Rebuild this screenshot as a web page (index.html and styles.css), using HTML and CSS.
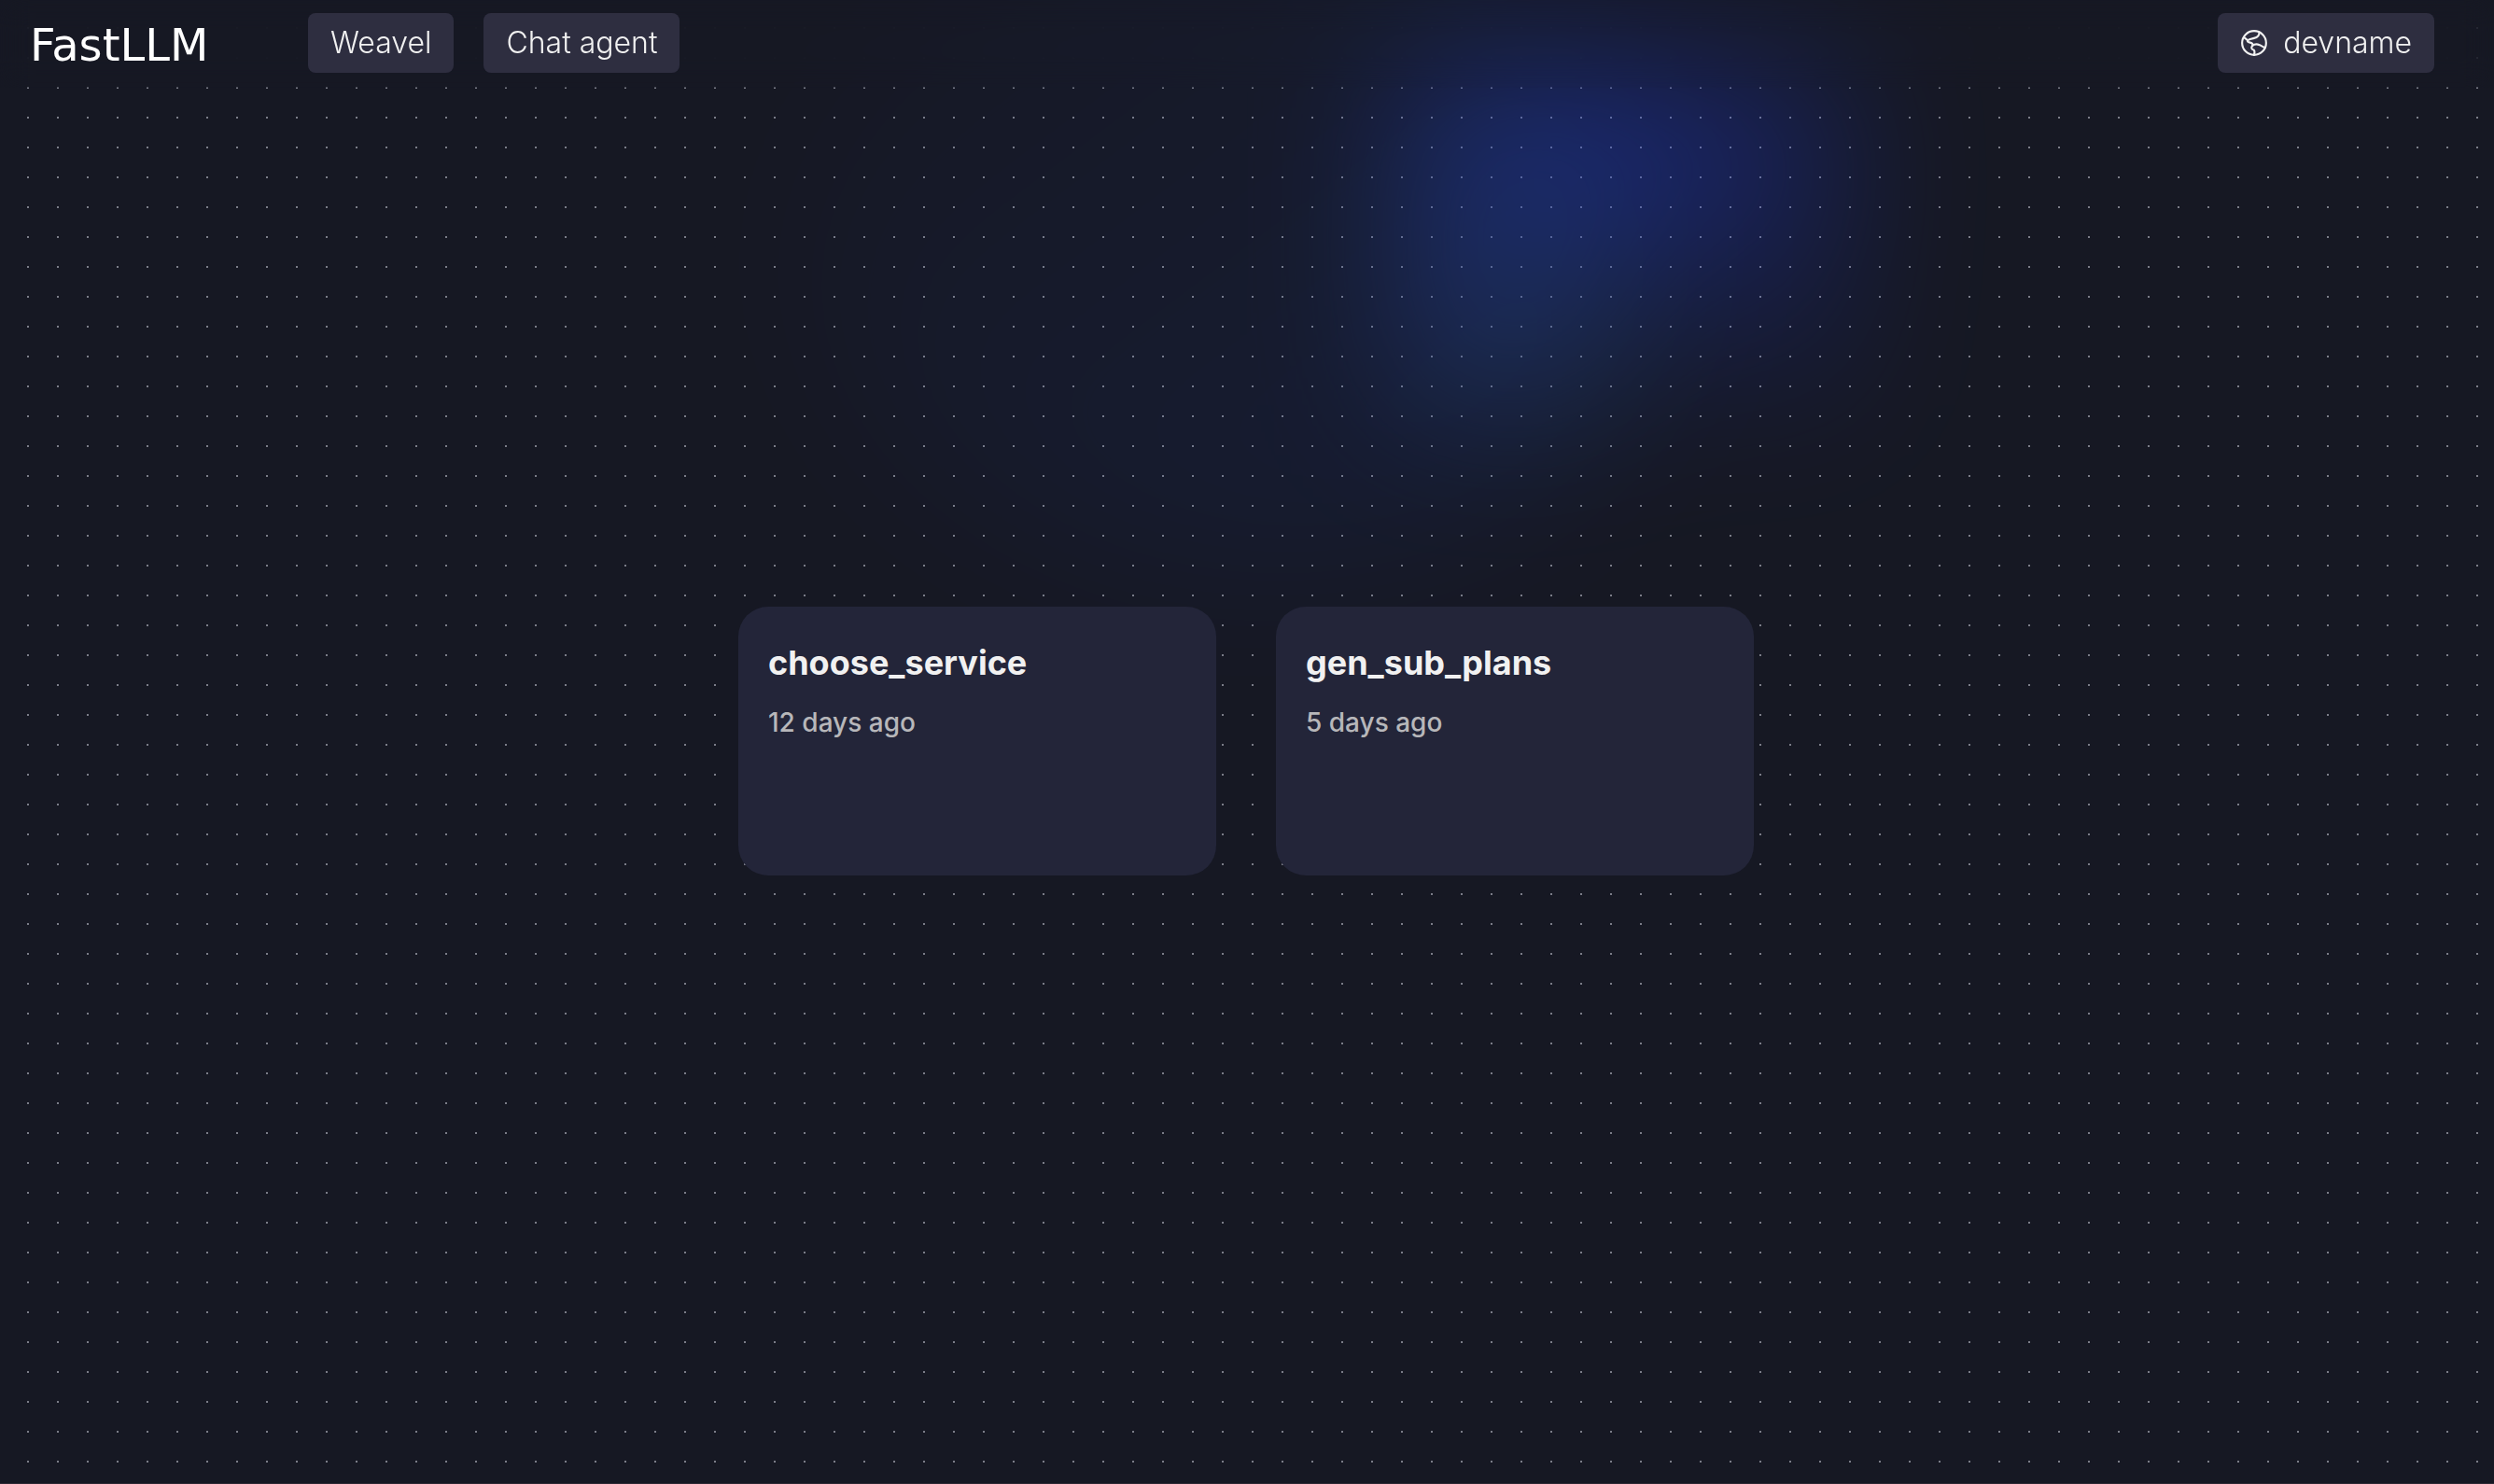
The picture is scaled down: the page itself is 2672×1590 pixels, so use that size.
FILE: index.html
```html
<!DOCTYPE html>
<html lang="en">
<head>
  <meta charset="utf-8">
  <meta name="viewport" content="width=device-width, initial-scale=1">
  <title>FastLLM</title>
  <link rel="stylesheet" href="styles.css">
</head>
<body>
  <div class="page">
    <div class="glow" aria-hidden="true"></div>
    <div class="dots" aria-hidden="true"></div>
    <main class="main">
      <a class="card" href="#choose_service">
        <h2 class="card-title">choose_service</h2>
        <p class="card-date">12 days ago</p>
      </a>
      <a class="card" href="#gen_sub_plans">
        <h2 class="card-title">gen_sub_plans</h2>
        <p class="card-date">5 days ago</p>
      </a>
    </main>
    <header class="header">
      <a class="logo" href="#home">FastLLM</a>
      <nav class="nav">
        <button class="button" type="button">Weavel</button>
        <button class="button" type="button">Chat agent</button>
      </nav>
      <button class="button button-user" type="button">
        <svg class="icon" viewBox="0 0 28 28" fill="none" stroke="currentColor" stroke-width="2" stroke-linecap="round" stroke-linejoin="round" aria-hidden="true">
          <circle cx="14" cy="14" r="12"/>
          <path d="M19 3.200C19.500 6 17.500 8.500 14 9.200L10 10.200C8 10.800 6.500 12 8 13C9.500 14 12.500 13.500 12.500 15.500V16.500"/>
          <path d="M4 8.500L7 11"/>
          <path d="M25 19L19.500 16C17 15 14.500 15 12.500 16.500C10.500 18.500 11.500 20.500 13.500 21C14.800 21.800 14.500 24 14 26"/>
        </svg>
        devname
      </button>
    </header>
  </div>
</body>
</html>
```
FILE: styles.css
```css
* {
  box-sizing: border-box;
}

body {
  margin: 0;
  background: #161823;
  color: #f1f1f1;
  font-family: Inter, "Liberation Sans", sans-serif;
}

.page {
  display: grid;
  min-height: 100vh;
  overflow: hidden;
  border-bottom: 1px solid #2b2833;
}

/* Header, backdrop and content are stacked in one cell. */
.page > * {
  grid-area: 1 / 1;
}

.glow {
  position: relative;
  height: 508px;
}

.glow::before,
.glow::after {
  content: "";
  position: absolute;
  left: 50%;
  top: 50%;
  filter: blur(80px);
}

.glow::before {
  width: 960px;
  height: 720px;
  border-radius: 50%;
  background: linear-gradient(to bottom right, transparent, #1d4ed8);
  opacity: 0.1;
  transform: translate(-50%, -50%);
}

.glow::after {
  width: 480px;
  height: 360px;
  background: conic-gradient(from 180deg at 50% 50%, #26486c, #203fee, rgba(32, 60, 238, 0));
  opacity: 0.4;
  transform: translate(33.333%, -50%);
}

.dots {
  background-image: conic-gradient(from 270deg at 2px 2px, #7b7d88 90deg, transparent 0);
  background-size: 32px 32px;
  background-position: 29px 29px;
}

.header {
  position: relative;
  align-self: start;
  display: flex;
  align-items: center;
  height: 94px;
  padding: 0 64px 2px 32px;
  backdrop-filter: blur(16px);
}

.logo {
  width: 298px;
  padding-top: 4px;
  color: #fff;
  font-family: "DejaVu Sans", sans-serif;
  font-size: 48px;
  font-weight: 400;
  line-height: 64px;
  text-decoration: none;
}

.nav {
  display: flex;
  gap: 32px;
}

.button {
  display: flex;
  align-items: center;
  height: 64px;
  padding: 0 24px;
  border: 0;
  border-radius: 8px;
  background: #2e2e40;
  color: #f1f1f1;
  font: 300 32px/40px Inter, "Liberation Sans", sans-serif;
  cursor: pointer;
}

.button-user {
  gap: 16px;
  margin-left: auto;
}

.icon {
  width: 30px;
  height: 30px;
}

.main {
  position: relative;
  display: flex;
  flex-wrap: wrap;
  justify-content: center;
  align-content: center;
  gap: 64px;
  padding: 0 2px 2px 0;
}

.card {
  width: 512px;
  height: 288px;
  padding: 40px 32px;
  border-radius: 32px;
  background: #232539;
  color: #f1f1f1;
  text-decoration: none;
}

.card-title {
  margin: 0 0 20px;
  font-size: 36px;
  font-weight: 700;
  line-height: 40px;
}

.card-date {
  margin: 0;
  color: #b7b7ba;
  font-size: 28px;
  font-weight: 500;
  line-height: 48px;
}
```
